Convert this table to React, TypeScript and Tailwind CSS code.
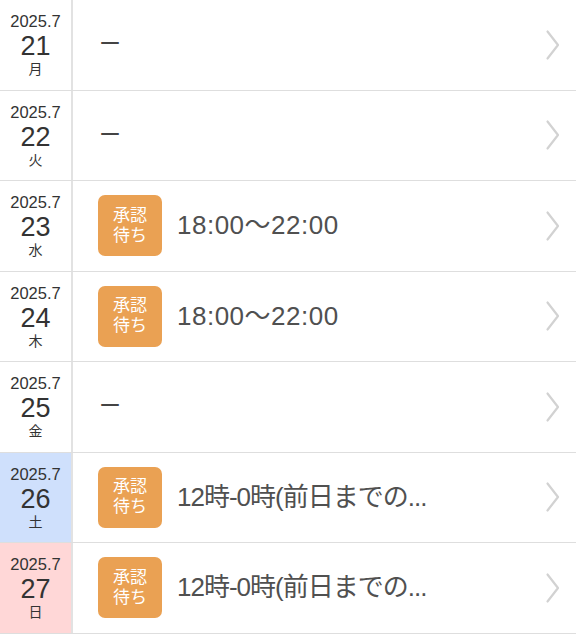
type Day = {
  day: string;
  wd: string;
  status?: boolean;
  text?: string;
  tight?: boolean;
  bg?: string;
};

const days: Day[] = [
  { day: '21', wd: '月' },
  { day: '22', wd: '火' },
  { day: '23', wd: '水', status: true, text: '18:00〜22:00' },
  { day: '24', wd: '木', status: true, text: '18:00〜22:00' },
  { day: '25', wd: '金' },
  { day: '26', wd: '土', status: true, text: '12時-0時(前日までの...', tight: true, bg: 'bg-[#cfe0fc]' },
  { day: '27', wd: '日', status: true, text: '12時-0時(前日までの...', tight: true, bg: 'bg-[#ffd7d7]' },
];

// thin chevron, narrower than lucide's
const Chevron = () => (
  <svg width="16" height="32" viewBox="0 0 16 32" className="ml-auto mr-[1px]" fill="none">
    <path d="M2.5 2.5 L13 16 L2.5 29.5" stroke="#d2d2d2" strokeWidth="2.2" strokeLinecap="round" strokeLinejoin="round" />
  </svg>
);

const Row = ({ d }: { d: Day }) => (
  <div className="flex h-[90.5px] border-b-[1.5px] border-[#dedede]">
    <div
      className={`w-[73px] shrink-0 flex flex-col items-center justify-center border-r-2 border-[#e2e2e2] text-[#333] ${d.bg ?? 'bg-white'}`}
    >
      <div className="text-[16.5px] leading-[20px]">2025.7</div>
      <div className="text-[27px] leading-[30px]">{d.day}</div>
      <div className="text-[14px] leading-[17px]">{d.wd}</div>
    </div>
    <div className="flex-1 flex items-center pl-[26px] pr-[14px] bg-white">
      {d.status ? (
        <>
          <div className="w-[64px] h-[61px] ml-[-1px] rounded-[7px] bg-[#eaa153] text-white flex flex-col items-center justify-center text-[17px] leading-[20px]">
            <span>承認</span>
            <span>待ち</span>
          </div>
          <div
            className={`ml-[15px] text-[26px] text-[#505050] ${d.tight ? 'tracking-[-1px]' : 'tracking-[0.5px]'}`}
          >
            {d.text}
          </div>
        </>
      ) : (
        <div className="text-[22px] text-[#444] mb-[2px]">ー</div>
      )}
      <Chevron />
    </div>
  </div>
);

export default function App() {
  return (
    <div
      className="w-[576px] h-[634px] overflow-hidden bg-white"
      style={{ fontFamily: '"Liberation Sans", "Noto Sans CJK JP", sans-serif' }}
    >
      {days.map((d) => (
        <Row key={d.day} d={d} />
      ))}
    </div>
  );
}
